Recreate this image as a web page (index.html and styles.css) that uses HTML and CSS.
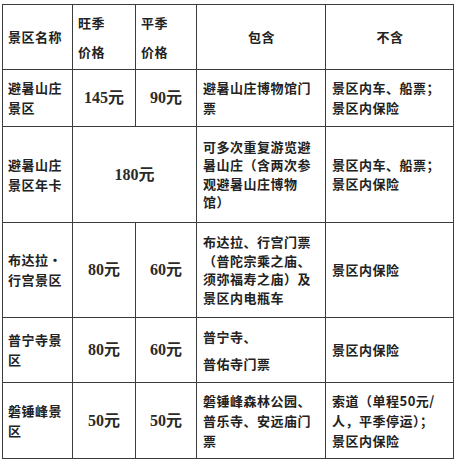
FILE: index.html
```html
<!DOCTYPE html>
<html lang="zh-CN">
<head>
<meta charset="utf-8">
<link rel="stylesheet" href="styles.css">
</head>
<body>
<table class="price">
  <colgroup>
    <col class="c-name">
    <col class="c-peak">
    <col class="c-flat">
    <col class="c-inc">
    <col class="c-exc">
  </colgroup>
  <tr class="r-head">
    <td class="name">景区名称</td>
    <td class="head2">旺季<br>价格</td>
    <td class="head2">平季<br>价格</td>
    <td class="center">包含</td>
    <td class="center">不含</td>
  </tr>
  <tr class="r1">
    <td class="name">避暑山庄<br>景区</td>
    <td class="money">145元</td>
    <td class="money">90元</td>
    <td class="text">避暑山庄博物馆门<br>票</td>
    <td class="text">景区内车、船票；<br>景区内保险</td>
  </tr>
  <tr class="r2">
    <td class="name">避暑山庄<br>景区年卡</td>
    <td class="money" colspan="2">180元</td>
    <td class="text tight">可多次重复游览避<br>暑山庄（含两次参<br>观避暑山庄博物<br>馆）</td>
    <td class="text tight">景区内车、船票；<br>景区内保险</td>
  </tr>
  <tr class="r3">
    <td class="name">布达拉·<br>行宫景区</td>
    <td class="money">80元</td>
    <td class="money">60元</td>
    <td class="text tight">布达拉、行宫门票<br>（普陀宗乘之庙、<br>须弥福寿之庙）及<br>景区内电瓶车</td>
    <td class="text">景区内保险</td>
  </tr>
  <tr class="r4">
    <td class="name">普宁寺景<br>区</td>
    <td class="money">80元</td>
    <td class="money">60元</td>
    <td class="text wide">普宁寺、<br>普佑寺门票</td>
    <td class="text">景区内保险</td>
  </tr>
  <tr class="r5">
    <td class="name">磐锤峰景<br>区</td>
    <td class="money">50元</td>
    <td class="money">50元</td>
    <td class="text">磐锤峰森林公园、<br>普乐寺、安远庙门<br>票</td>
    <td class="text">索道（单程50元/<br>人，平季停运）；<br>景区内保险</td>
  </tr>
</table>
</body>
</html>
```

FILE: styles.css
```css
html, body {
  margin: 0;
  padding: 0;
  background: #ffffff;
}

body {
  padding: 4px 0 0 2px;
  font-family: "Noto Sans CJK SC", "Noto Sans", sans-serif;
  color: #222222;
}

.price {
  border-collapse: collapse;
  table-layout: fixed;
  width: 451px;
  font-size: 13px;
  letter-spacing: 0.5px;
  font-weight: 700;
}

.c-name { width: 70px; }
.c-peak { width: 63px; }
.c-flat { width: 61px; }
.c-inc { width: 129px; }
.c-exc { width: 128px; }

.price td {
  border: 1px solid #3c3c3c;
  padding: 0 4px 0 5px;
  vertical-align: middle;
  line-height: 20px;
  white-space: nowrap;
  overflow: hidden;
}

.r-head td { height: 64px; }
.r1 td { height: 56px; }
.r2 td { height: 95px; }
.r3 td { height: 94px; }
.r4 td { height: 64px; }
.r5 td { height: 75px; }

.price td.head2 {
  line-height: 29px;
  padding-left: 5px;
}

.price td.center {
  text-align: center;
}

.price td.money {
  text-align: center;
  font-family: "Liberation Serif", "Noto Sans CJK SC", serif;
  font-size: 16px;
  font-weight: 700;
  letter-spacing: 0;
  padding: 0;
  color: #2a2a2a;
}

.price td.text {
  padding-left: 6px;
}

.price td.tight {
  line-height: 18.5px;
}

.price td.wide {
  line-height: 27px;
}
```
